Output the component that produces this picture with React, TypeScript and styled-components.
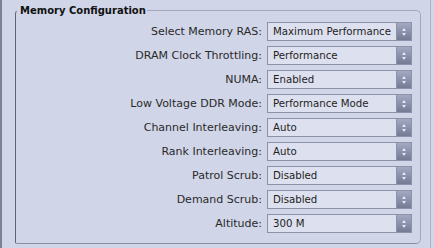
import React from "react";
import styled, { createGlobalStyle } from "styled-components";

const GlobalStyle = createGlobalStyle`
  html, body { margin: 0; padding: 0; }
  body {
    background: #d0d5e8;
    font-family: "DejaVu Sans", Verdana, sans-serif;
  }
`;

const Page = styled.div`
  box-sizing: border-box;
  width: 434px;
  height: 248px;
  border-left: 2px solid #7c8196;
  padding: 4px 10px 0 13px;
  position: relative;
  &::after {
    content: "";
    position: absolute;
    top: 0;
    bottom: 0;
    right: 3px;
    width: 1px;
    background: #aeb2c6;
  }
`;

const Fieldset = styled.fieldset`
  box-sizing: border-box;
  margin: 0;
  width: 406px;
  height: 240px;
  padding: 5px 8px 0 0;
  border-style: solid;
  border-width: 1px;
  border-color: #a4a8bc #a4a8bc #8c90a6 #5e6379;
  border-radius: 4px 5px 5px 2px;
`;

const Legend = styled.legend`
  padding: 0 1px 0 3px;
  margin-left: 1px;
  font-size: 10px;
  font-weight: bold;
  color: #111;
  line-height: 13px;
`;

const Grid = styled.div`
  display: grid;
  grid-template-columns: 1fr 145px;
  column-gap: 5px;
  row-gap: 5px;
  align-items: center;
`;

const Label = styled.div`
  text-align: right;
  font-size: 11px;
  color: #2a2a2a;
  white-space: nowrap;
`;

const SelectBox = styled.div`
  box-sizing: border-box;
  height: 19px;
  display: flex;
  border: 1px solid #8e92a8;
  background: #dde0ee;
`;

const SelectText = styled.div`
  flex: 1;
  padding-left: 5px;
  font-size: 10.2px;
  line-height: 17px;
  color: #1e1e1e;
  white-space: nowrap;
  overflow: hidden;
`;

const Spin = styled.div`
  width: 14px;
  border-left: 1px solid #8e92a8;
  background: linear-gradient(#a3a9c1, #737a94);
  display: flex;
  flex-direction: column;
  align-items: center;
  justify-content: center;
  gap: 2px;
`;

const Arrow = styled.div<{ $down?: boolean }>`
  width: 0;
  height: 0;
  border-left: 2.5px solid transparent;
  border-right: 2.5px solid transparent;
  ${(p) =>
    p.$down
      ? "border-top: 3px solid #e4e7f2;"
      : "border-bottom: 3px solid #e4e7f2;"}
`;

const rows: [string, string][] = [
  ["Select Memory RAS:", "Maximum Performance"],
  ["DRAM Clock Throttling:", "Performance"],
  ["NUMA:", "Enabled"],
  ["Low Voltage DDR Mode:", "Performance Mode"],
  ["Channel Interleaving:", "Auto"],
  ["Rank Interleaving:", "Auto"],
  ["Patrol Scrub:", "Disabled"],
  ["Demand Scrub:", "Disabled"],
  ["Altitude:", "300 M"],
];

export default function App() {
  return (
    <>
      <GlobalStyle />
      <Page>
        <Fieldset>
          <Legend>Memory Configuration</Legend>
          <Grid>
            {rows.map(([l, v]) => (
              <React.Fragment key={l}>
                <Label>{l}</Label>
                <SelectBox>
                  <SelectText>{v}</SelectText>
                  <Spin>
                    <Arrow />
                    <Arrow $down />
                  </Spin>
                </SelectBox>
              </React.Fragment>
            ))}
          </Grid>
        </Fieldset>
      </Page>
    </>
  );
}
